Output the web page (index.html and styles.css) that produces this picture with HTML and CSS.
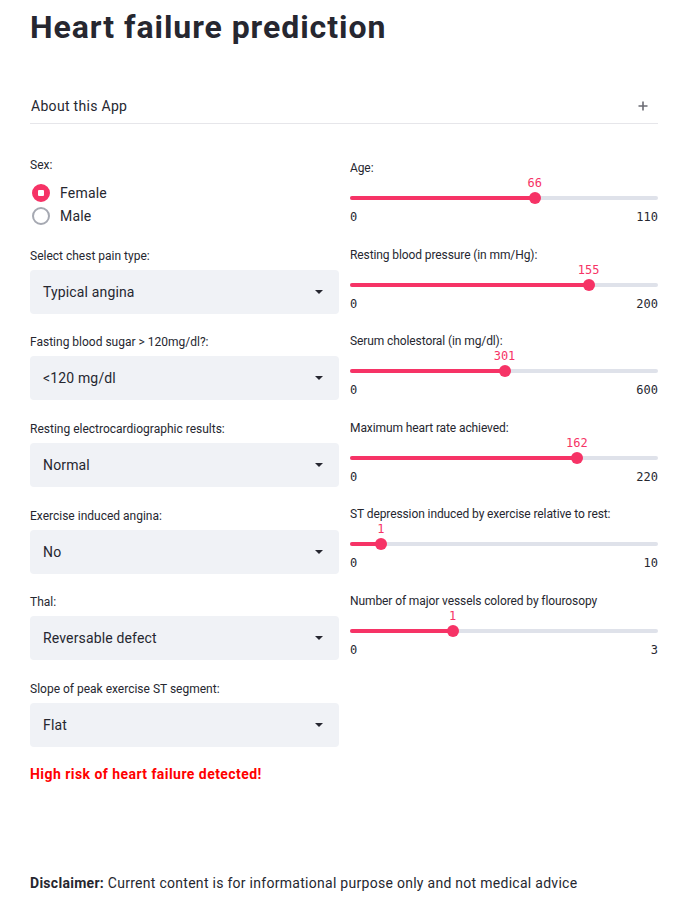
FILE: index.html
```html
<!DOCTYPE html>
<html>
<head>
<meta charset="utf-8">
<link rel="stylesheet" href="styles.css">
</head>
<body>
<main class="main">
  <h1 class="title">Heart failure prediction</h1>
  <div class="expander">
    <span>About this App</span>
    <svg class="plus" width="10" height="10" viewBox="0 0 10 10"><path d="M5 0.5v9M0.5 5h9" stroke="#6b6c74" stroke-width="1.6"/></svg>
  </div>

  <div class="columns">
    <div class="col">
      <div class="field">
        <div class="label">Sex:</div>
        <div class="radios">
          <div class="radio"><span class="dot on"></span>Female</div>
          <div class="radio"><span class="dot"></span>Male</div>
        </div>
      </div>
      <div class="field">
        <div class="label">Select chest pain type:</div>
        <div class="select"><span>Typical angina</span><span class="caret"></span></div>
      </div>
      <div class="field">
        <div class="label">Fasting blood sugar &gt; 120mg/dl?:</div>
        <div class="select"><span>&lt;120 mg/dl</span><span class="caret"></span></div>
      </div>
      <div class="field">
        <div class="label">Resting electrocardiographic results:</div>
        <div class="select"><span>Normal</span><span class="caret"></span></div>
      </div>
      <div class="field">
        <div class="label">Exercise induced angina:</div>
        <div class="select"><span>No</span><span class="caret"></span></div>
      </div>
      <div class="field">
        <div class="label">Thal:</div>
        <div class="select"><span>Reversable defect</span><span class="caret"></span></div>
      </div>
      <div class="field">
        <div class="label">Slope of peak exercise ST segment:</div>
        <div class="select"><span>Flat</span><span class="caret"></span></div>
      </div>
    </div>

    <div class="col sliders">
      <div class="slider">
        <div class="label">Age:</div>
        <div class="track-area" style="--p: 60%">
          <span class="value">66</span>
          <div class="track"><div class="fill"></div><span class="thumb"></span></div>
        </div>
        <div class="ticks"><span>0</span><span>110</span></div>
      </div>
      <div class="slider">
        <div class="label">Resting blood pressure (in mm/Hg):</div>
        <div class="track-area" style="--p: 77.5%">
          <span class="value">155</span>
          <div class="track"><div class="fill"></div><span class="thumb"></span></div>
        </div>
        <div class="ticks"><span>0</span><span>200</span></div>
      </div>
      <div class="slider">
        <div class="label">Serum cholestoral (in mg/dl):</div>
        <div class="track-area" style="--p: 50.1667%">
          <span class="value">301</span>
          <div class="track"><div class="fill"></div><span class="thumb"></span></div>
        </div>
        <div class="ticks"><span>0</span><span>600</span></div>
      </div>
      <div class="slider">
        <div class="label">Maximum heart rate achieved:</div>
        <div class="track-area" style="--p: 73.636%">
          <span class="value">162</span>
          <div class="track"><div class="fill"></div><span class="thumb"></span></div>
        </div>
        <div class="ticks"><span>0</span><span>220</span></div>
      </div>
      <div class="slider">
        <div class="label">ST depression induced by exercise relative to rest:</div>
        <div class="track-area" style="--p: 10%">
          <span class="value">1</span>
          <div class="track"><div class="fill"></div><span class="thumb"></span></div>
        </div>
        <div class="ticks"><span>0</span><span>10</span></div>
      </div>
      <div class="slider">
        <div class="label">Number of major vessels colored by flourosopy</div>
        <div class="track-area" style="--p: 33.333%">
          <span class="value">1</span>
          <div class="track"><div class="fill"></div><span class="thumb"></span></div>
        </div>
        <div class="ticks"><span>0</span><span>3</span></div>
      </div>
    </div>
  </div>

  <p class="alert">High risk of heart failure detected!</p>
  <p class="disclaimer"><strong>Disclaimer:</strong> Current content is for informational purpose only and not medical advice</p>
</main>
</body>
</html>
```

FILE: styles.css
```css
* { box-sizing: border-box; }
html, body { margin: 0; padding: 0; background: #fff; }
body {
  font-family: "Roboto", "Noto Sans", sans-serif;
  color: #262730;
}
.main {
  width: 628px;
  margin-left: 30px;
  padding-top: 7px;
}
.title {
  margin: 0;
  font-size: 32px;
  line-height: 40px;
  font-weight: 700;
  letter-spacing: 0.95px;
}
.expander {
  margin-top: 41px;
  height: 36px;
  display: flex;
  align-items: center;
  justify-content: space-between;
  padding: 0 10px 0 1px;
  font-size: 14px;
  letter-spacing: 0.3px;
  border-bottom: 1px solid #e6e6ea;
}
.plus { display: block; }
.columns {
  display: grid;
  grid-template-columns: 309px 308px;
  column-gap: 11px;
  margin-top: 33px;
}
.col { display: flex; flex-direction: column; gap: 20.7px; }
.label {
  font-size: 12px;
  line-height: 16px;
  height: 16px;
  white-space: nowrap;
}
.sliders .label { letter-spacing: -0.1px; }
.field .label { margin-bottom: 6px; }
.radios { display: flex; flex-direction: column; padding-top: 2px; }
.radio {
  display: flex;
  align-items: center;
  height: 23px;
  font-size: 14px;
  letter-spacing: 0.2px;
  padding-left: 2px;
}
.dot {
  width: 18px; height: 18px;
  border-radius: 50%;
  border: 2px solid #a6a9b2;
  margin-right: 10px;
  background: #fff;
  display: flex; align-items: center; justify-content: center;
}
.dot.on {
  border-color: #f63366;
  background: #f63366;
}
.dot.on::after {
  content: "";
  width: 6px; height: 6px;
  background: #fff;
  border-radius: 1px;
}
.select {
  height: 44px;
  background: #f0f2f6;
  border-radius: 4px;
  display: flex;
  align-items: center;
  justify-content: space-between;
  padding: 0 16px 0 13px;
  font-size: 14px;
  letter-spacing: 0.15px;
}
.caret {
  width: 0; height: 0;
  border-left: 4px solid transparent;
  border-right: 4px solid transparent;
  border-top: 4px solid #262730;
}
.sliders { gap: 22.5px; padding-top: 3px; }
.slider { display: flex; flex-direction: column; }
.track-area {
  position: relative;
  height: 30px;
}
.value {
  position: absolute;
  top: 0;
  left: var(--p);
  transform: translateX(-50%);
  font-family: "DejaVu Sans Mono", "Liberation Mono", monospace;
  font-size: 12px;
  line-height: 14px;
  color: #f63366;
}
.track {
  position: absolute;
  left: 0; right: 0;
  top: 20px;
  height: 4px;
  border-radius: 2px;
  background: #dfe2ea;
}
.fill {
  height: 100%;
  width: var(--p);
  background: #f63366;
  border-radius: 2px;
}
.thumb {
  position: absolute;
  top: 50%;
  left: var(--p);
  width: 12px; height: 12px;
  margin: -6px 0 0 -6px;
  border-radius: 50%;
  background: #f63366;
}
.ticks {
  display: flex;
  justify-content: space-between;
  margin-top: 4px;
  font-family: "DejaVu Sans Mono", "Liberation Mono", monospace;
  font-size: 12px;
  line-height: 14px;
  color: #262730;
}
.alert {
  margin: 19px 0 0;
  color: #ff0000;
  font-weight: 700;
  font-size: 14px;
  line-height: 16px;
  letter-spacing: 0.45px;
}
.disclaimer {
  margin: 93px 0 0;
  font-size: 14px;
  line-height: 16px;
  letter-spacing: 0.28px;
}
.disclaimer strong { font-weight: 700; }
```
